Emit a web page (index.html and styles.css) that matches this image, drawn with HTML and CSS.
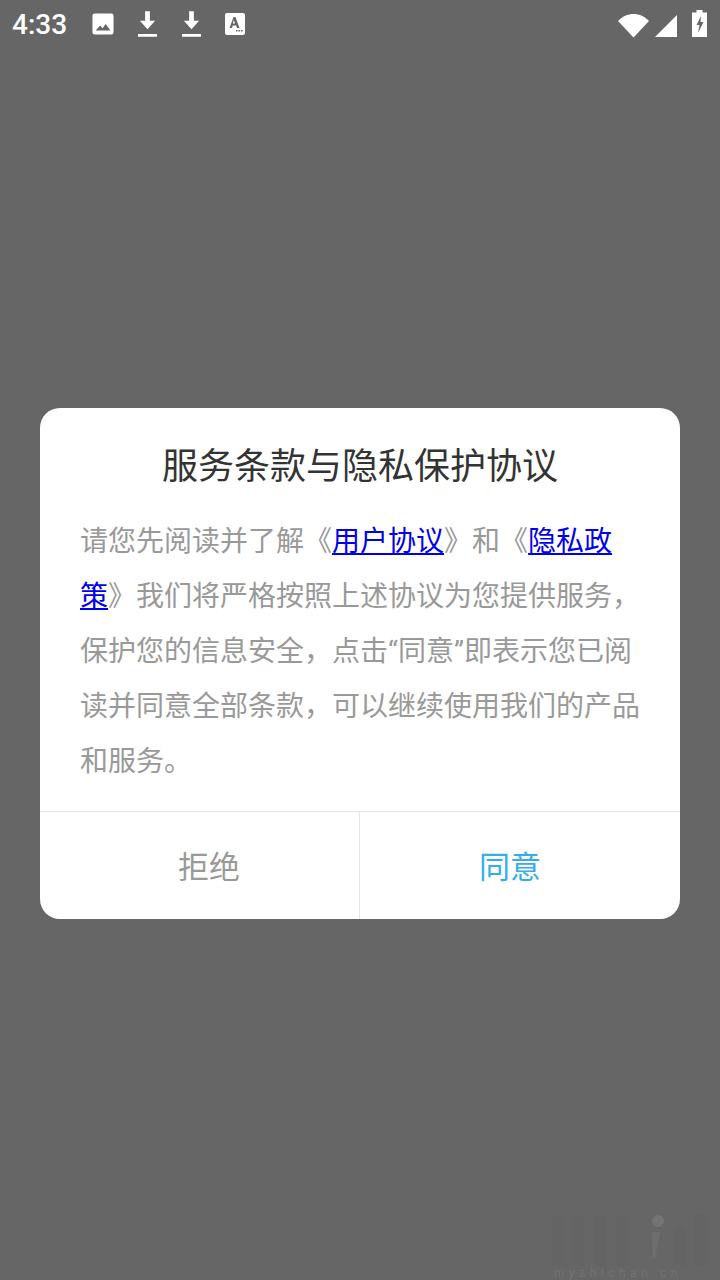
FILE: index.html
```html
<!DOCTYPE html>
<html lang="zh-CN">
<head>
<meta charset="utf-8">
<title>服务条款与隐私保护协议</title>
<link rel="stylesheet" href="styles.css">
</head>
<body>
<div class="screen">
  <header class="status">
    <div class="status-left">
      <span class="time">4:33</span>
      <svg class="ic ic-img" width="22" height="22" viewBox="0 0 24 24"><path fill="#fff" fill-rule="evenodd" d="M3 0.5h18a2.500 2.500 0 0 1 2.500 2.500v18a2.500 2.500 0 0 1-2.500 2.500h-18a2.500 2.500 0 0 1-2.500-2.500v-18a2.500 2.500 0 0 1 2.500-2.500zM4 19h16l-5-7-3.500 4.500-2.500-3z"/></svg>
      <svg class="ic ic-dl" width="19" height="26" viewBox="0 0 20 27"><path fill="#fff" d="M7.500 0h5v10h5.500l-8 9-8-9h5.500zM0 24h20v3h-20z"/></svg>
      <svg class="ic ic-dl ic-dl-next" width="19" height="26" viewBox="0 0 20 27"><path fill="#fff" d="M7.500 0h5v10h5.500l-8 9-8-9h5.500zM0 24h20v3h-20z"/></svg>
      <svg class="ic ic-a" width="20" height="22" viewBox="0 0 20 22"><path fill="#fff" fill-rule="evenodd" d="M2 0h16a2 2 0 0 1 2 2v18a2 2 0 0 1-2 2h-16a2 2 0 0 1-2-2v-18a2 2 0 0 1 2-2zM8.500 4l-4 11h2.500l.8-2.500h3.400l.8 2.500h2.500l-4-11zM10 10.500h-2.200l1.100-3.400zM11 17h1.600v1.600h-1.600zM13.500 17h1.600v1.600h-1.600zM16 17h1.600v1.600h-1.600z"/></svg>
    </div>
    <div class="status-right">
      <svg class="ic-wifi" width="31" height="25" viewBox="0 0 31 25"><path fill="#fff" d="M15.500 24.500L0 8C4.500 3.500 9.500 1 15.500 1s11 2.500 15.500 7z"/></svg>
      <svg class="ic-signal" width="22" height="22" viewBox="0 0 22 22"><path fill="#fff" d="M0 22L22 0v22z"/></svg>
      <svg class="ic-battery" width="15" height="27" viewBox="0 0 15 27"><path fill="#fff" fill-rule="evenodd" d="M4.500 0h6v2.500h4.500v24.500h-15v-24.500h4.500zM9 6l-4.500 9h3l-1.500 8 5.500-11h-3z"/></svg>
    </div>
  </header>

  <section class="dialog">
    <h1 class="dialog-title">服务条款与隐私保护协议</h1>
    <p class="dialog-body">请您先阅读并了解《<a class="link" href="#">用户协议</a>》和《<a class="link" href="#">隐私政策</a>》我们将严格按照上述协议为您提供服务，保护您的信息安全，点击“同意”即表示您已阅读并同意全部条款，可以继续使用我们的产品和服务。</p>
    <div class="dialog-actions">
      <button class="action action-refuse">拒绝</button>
      <button class="action action-agree">同意</button>
    </div>
  </section>

  <div class="watermark" aria-hidden="true">
    <svg width="172" height="52" viewBox="0 0 172 52"><path fill="#646464" d="M4 2h12v50h-12zM24 2h12v50h-12zM46 2h12v50h-12zM68 2h12v50h-12zM126 14h12v38h-12zM146 0h14v52h-14z"/><circle cx="110" cy="7" r="6" fill="#737373"/><path fill="#6e6e6e" d="M104 18h8l-5 26h-2z"/></svg>
    <span class="watermark-text">myzhichan.cn</span>
  </div>
</div>
</body>
</html>
```

FILE: styles.css
```css
* { box-sizing: border-box; }
html, body { margin: 0; padding: 0; }
body {
  width: 720px;
  height: 1280px;
  overflow: hidden;
  font-family: Roboto, "Noto Sans CJK SC", sans-serif;
}
.screen {
  position: relative;
  width: 720px;
  height: 1280px;
  background: #666666;
  display: flex;
  flex-direction: column;
  overflow: hidden;
}
.status {
  height: 50px;
  padding: 0 13px 0 12px;
  display: flex;
  align-items: center;
  justify-content: space-between;
  color: #fff;
}
.status-left { display: flex; align-items: center; }
.ic { margin-bottom: 2px; }
.ic-img { margin-left: 26px; }
.ic-dl { margin-left: 24px; }
.ic-dl-next { margin-left: 25px; }
.ic-a { margin-left: 24px; }
.time { font-size: 28px; font-weight: 500; line-height: 50px; width: 54px; }
.status-right { display: flex; align-items: center; }
.ic-signal { margin-left: 6px; margin-top: 1px; }
.ic-battery { margin-left: 15px; margin-bottom: 3px; }
.dialog {
  margin: 358px 40px 0;
  height: 511px;
  background: #fff;
  border-radius: 20px;
  display: flex;
  flex-direction: column;
  overflow: hidden;
}
.dialog-title {
  margin: 0;
  height: 104px;
  padding-top: 32px;
  font-size: 36px;
  line-height: 54px;
  font-weight: 400;
  color: #333333;
  text-align: center;
}
.dialog-body {
  margin: 0;
  height: 299px;
  padding: 2px 38px 0 40px;
  font-size: 28px;
  line-height: 55px;
  color: #999999;
}
.link { color: #0000ee; text-decoration: underline; }
.dialog-actions {
  flex: 1;
  display: flex;
  border-top: 1px solid #e5e5e5;
}
.action {
  padding: 0 0 2px;
  border: 0;
  background: none;
  font-family: inherit;
  font-size: 31px;
}
.action-refuse {
  width: 320px;
  padding-left: 19px;
  color: #999999;
  border-right: 1px solid #e5e5e5;
}
.action-agree {
  width: 320px;
  padding-right: 20px;
  color: #33aeea;
}
.watermark {
  position: absolute;
  right: 0;
  bottom: 0;
  width: 172px;
  height: 66px;
}
.watermark svg { position: absolute; left: 0; top: 0; }
.watermark-text {
  position: absolute;
  left: 6px;
  bottom: 0;
  font-size: 12px;
  line-height: 14px;
  letter-spacing: 4.500px;
  white-space: nowrap;
  color: #727272;
}
```
